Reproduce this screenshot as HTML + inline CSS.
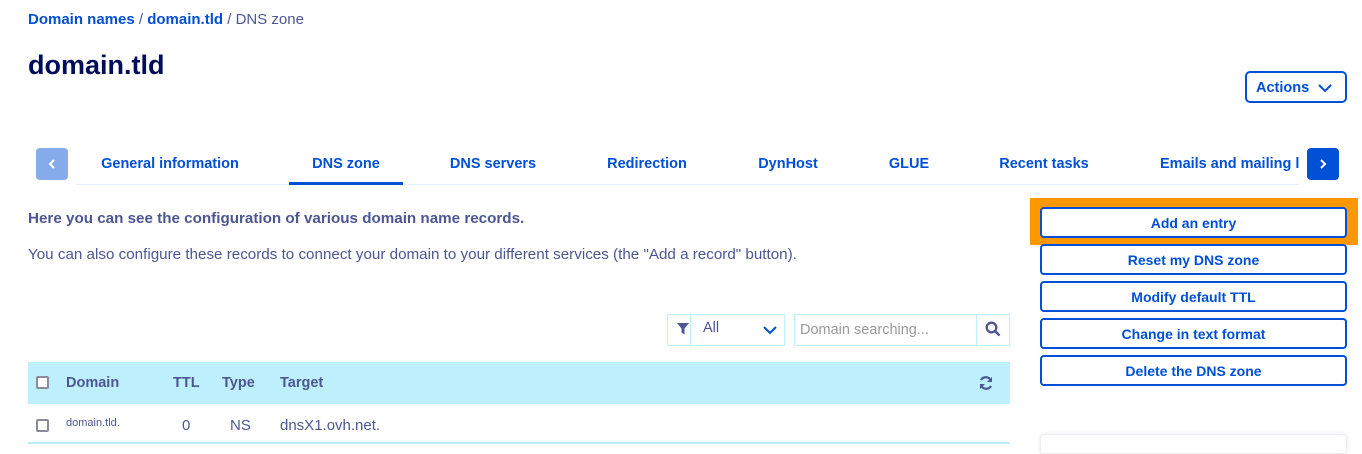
<!DOCTYPE html>
<html><head><meta charset="utf-8"><style>
*{margin:0;padding:0;box-sizing:border-box}
body{width:1362px;height:444px;overflow:hidden;background:#fff;font-family:"Liberation Sans",sans-serif;color:#4d5693;position:relative}
.a{position:absolute;white-space:nowrap}
.b{font-weight:bold}
.blue{color:#0050d7}
.tab{position:absolute;top:156px;font-size:14.5px;font-weight:bold;color:#0050d7;transform:translateX(-50%);white-space:nowrap}
.btn{position:absolute;left:1040px;width:307px;height:31px;border:2px solid #0050d7;border-radius:4px;color:#0050d7;font-weight:bold;font-size:14px;text-align:center;line-height:28px;background:#fff}
.cb{position:absolute;width:13px;height:13px;border:2px solid #8b8b9b;border-radius:2px;background:#fff}
</style></head><body>
<div class="a" style="left:28px;top:11px;font-size:15px"><span class="b blue">Domain names</span> / <span class="b blue">domain.tld</span> / <span style="color:#4d5693">DNS zone</span></div>
<div class="a b" style="left:28px;top:50px;font-size:27px;color:#000e5a">domain.tld</div>
<div class="a" style="left:1245px;top:71px;width:102px;height:32px;border:2px solid #0050d7;border-radius:5px;color:#0050d7;font-weight:bold;font-size:14.5px;line-height:30px;padding-left:9px">Actions
<svg style="position:absolute;right:12px;top:10px" width="16" height="10" viewBox="0 0 16 10"><path d="M2 2l6 6 6-6" fill="none" stroke="#0050d7" stroke-width="2"/></svg></div>
<div class="a" style="left:36px;top:148px;width:32px;height:32px;background:#85abea;border-radius:4px"><svg width="32" height="32"><path d="M18 12l-4 4 4 4" fill="none" stroke="#fff" stroke-width="2"/></svg></div>
<div class="a" style="left:1307px;top:148px;width:32px;height:32px;background:#0050d7;border-radius:4px"><svg width="32" height="32"><path d="M14 12l4 4-4 4" fill="none" stroke="#fff" stroke-width="2"/></svg></div>
<div class="a" style="left:76px;top:184px;width:1223px;height:1px;background:#e3eef8"></div>
<div class="a" style="left:289px;top:182px;width:114px;height:3px;background:#0050d7"></div>
<div style="position:absolute;left:76px;top:0;width:1223px;height:200px;overflow:hidden">
<div class="tab" style="left:94px">General information</div>
<div class="tab" style="left:270px">DNS zone</div>
<div class="tab" style="left:417px">DNS servers</div>
<div class="tab" style="left:571px">Redirection</div>
<div class="tab" style="left:712px">DynHost</div>
<div class="tab" style="left:833px">GLUE</div>
<div class="tab" style="left:968px">Recent tasks</div>
<div class="tab" style="left:1084px;transform:none">Emails and mailing lists</div>
</div>
<div class="a b" style="left:28px;top:210px;font-size:15.2px">Here you can see the configuration of various domain name records.</div>
<div class="a" style="left:28px;top:246px;font-size:15.2px">You can also configure these records to connect your domain to your different services (the "Add a record" button).</div>
<div class="a" style="left:1030px;top:198px;width:328px;height:47px;background:#ff9800"></div>
<div class="btn" style="top:207px">Add an entry</div>
<div class="btn" style="top:244px">Reset my DNS zone</div>
<div class="btn" style="top:281px">Modify default TTL</div>
<div class="btn" style="top:318px">Change in text format</div>
<div class="btn" style="top:355px">Delete the DNS zone</div>
<div class="a" style="left:1040px;top:434px;width:307px;height:20px;border:1px solid #eee;border-radius:4px;box-shadow:0 0 4px #e8e8f4"></div>
<div class="a" style="left:667px;top:314px;width:118px;height:32px;border:1px solid #bdf0fc"></div>
<div class="a" style="left:690px;top:314px;width:1px;height:32px;background:#bdf0fc"></div>
<svg class="a" style="left:676px;top:322px" width="14" height="14"><path d="M1 1h12l-4.5 5.5v6l-3-2v-4z" fill="#4d5693"/></svg>
<div class="a" style="left:703px;top:320px;font-size:14.5px">All</div>
<svg class="a" style="left:762px;top:325px" width="16" height="10"><path d="M2 2l6 6 6-6" fill="none" stroke="#0050d7" stroke-width="2"/></svg>
<div class="a" style="left:794px;top:314px;width:216px;height:32px;border:1px solid #bdf0fc"></div>
<div class="a" style="left:976px;top:314px;width:1px;height:32px;background:#bdf0fc"></div>
<div class="a" style="left:800px;top:322px;font-size:14.5px;color:#999">Domain searching...</div>
<svg class="a" style="left:985px;top:321px" width="16" height="16"><circle cx="6.5" cy="6.5" r="4.8" fill="none" stroke="#4d5693" stroke-width="2.3"/><path d="M10 10l4.5 4.5" stroke="#4d5693" stroke-width="2.6"/></svg>
<div class="a" style="left:28px;top:362px;width:982px;height:42px;background:#bdf0fc"></div>
<div class="cb" style="left:36px;top:376px"></div>
<div class="a b" style="left:66px;top:375px;font-size:14.5px">Domain</div>
<div class="a b" style="left:173px;top:375px;font-size:14.5px">TTL</div>
<div class="a b" style="left:222px;top:375px;font-size:14.5px">Type</div>
<div class="a b" style="left:280px;top:375px;font-size:14.5px">Target</div>
<svg class="a" style="left:978px;top:375px" width="16" height="16" viewBox="0 0 16 16"><path d="M13 6A5.5 5.5 0 0 0 3 5M3 10a5.5 5.5 0 0 0 10 1" fill="none" stroke="#4d5693" stroke-width="2.2"/><path d="M14 2v5h-5zM2 14V9h5z" fill="#4d5693"/></svg>
<div class="cb" style="left:36px;top:419px"></div>
<div class="a" style="left:66px;top:417px;font-size:11px">domain.tld.</div>
<div class="a" style="left:182px;top:417px;font-size:15px">0</div>
<div class="a" style="left:230px;top:417px;font-size:15px">NS</div>
<div class="a" style="left:280px;top:417px;font-size:15px">dnsX1.ovh.net.</div>
<div class="a" style="left:28px;top:442px;width:982px;height:2px;background:#bdf0fc"></div>
</body></html>
